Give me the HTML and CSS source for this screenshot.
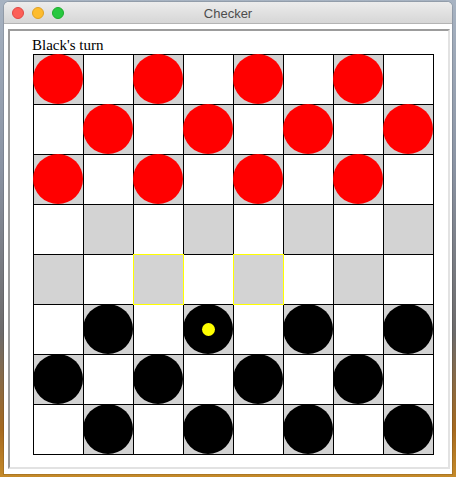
FILE: index.html
```html
<!DOCTYPE html>
<html>
<head>
<meta charset="utf-8">
<title>Checker</title>
<link rel="stylesheet" href="styles.css">
</head>
<body>
<div class="window">
  <div class="titlebar">
    <div class="lights">
      <span class="light red"></span>
      <span class="light yellow"></span>
      <span class="light green"></span>
    </div>
    <div class="title">Checker</div>
  </div>
  <div class="content">
    <div class="frame">
      <div class="status">Black's turn</div>
      <div class="board">
        <div class="cell dark"><span class="piece red"></span></div><div class="cell"></div><div class="cell dark"><span class="piece red"></span></div><div class="cell"></div><div class="cell dark"><span class="piece red"></span></div><div class="cell"></div><div class="cell dark"><span class="piece red"></span></div><div class="cell"></div>
        <div class="cell"></div><div class="cell dark"><span class="piece red"></span></div><div class="cell"></div><div class="cell dark"><span class="piece red"></span></div><div class="cell"></div><div class="cell dark"><span class="piece red"></span></div><div class="cell"></div><div class="cell dark"><span class="piece red"></span></div>
        <div class="cell dark"><span class="piece red"></span></div><div class="cell"></div><div class="cell dark"><span class="piece red"></span></div><div class="cell"></div><div class="cell dark"><span class="piece red"></span></div><div class="cell"></div><div class="cell dark"><span class="piece red"></span></div><div class="cell"></div>
        <div class="cell"></div><div class="cell dark"></div><div class="cell"></div><div class="cell dark"></div><div class="cell"></div><div class="cell dark"></div><div class="cell"></div><div class="cell dark"></div>
        <div class="cell dark"></div><div class="cell"></div><div class="cell dark target"></div><div class="cell"></div><div class="cell dark target"></div><div class="cell"></div><div class="cell dark"></div><div class="cell"></div>
        <div class="cell"></div><div class="cell dark"><span class="piece black"></span></div><div class="cell"></div><div class="cell dark"><span class="piece black"><span class="dot"></span></span></div><div class="cell"></div><div class="cell dark"><span class="piece black"></span></div><div class="cell"></div><div class="cell dark"><span class="piece black"></span></div>
        <div class="cell dark"><span class="piece black"></span></div><div class="cell"></div><div class="cell dark"><span class="piece black"></span></div><div class="cell"></div><div class="cell dark"><span class="piece black"></span></div><div class="cell"></div><div class="cell dark"><span class="piece black"></span></div><div class="cell"></div>
        <div class="cell"></div><div class="cell dark"><span class="piece black"></span></div><div class="cell"></div><div class="cell dark"><span class="piece black"></span></div><div class="cell"></div><div class="cell dark"><span class="piece black"></span></div><div class="cell"></div><div class="cell dark"><span class="piece black"></span></div>
      </div>
    </div>
  </div>
</div>
</body>
</html>
```
FILE: styles.css
```css
html, body {
  margin: 0;
  padding: 0;
}
body {
  width: 456px;
  height: 477px;
  overflow: hidden;
  background: linear-gradient(to bottom, #a7b3c2 0%, #8a93a3 35%, #6c6a6a 70%, #a5691f 90%, #c58a2a 100%);
}
.window {
  margin: 2px 4px 0 4px;
  width: 448px;
  height: 472px;
  background: #ffffff;
  border-radius: 5px 5px 0 0;
  overflow: hidden;
  box-shadow: 0 0 0 1px rgba(0,0,0,0.12);
}
.titlebar {
  height: 21px;
  border-bottom: 1px solid #b4b4b4;
  background: linear-gradient(to bottom, #ececec, #d6d6d6);
  display: flex;
  align-items: center;
  position: relative;
}
.lights {
  display: flex;
  gap: 8px;
  padding-left: 8px;
}
.light {
  width: 12px;
  height: 12px;
  border-radius: 50%;
  box-sizing: border-box;
}
.light.red { background: #fc5f57; border: 1px solid #df4744; }
.light.yellow { background: #fdbc2e; border: 1px solid #dea123; }
.light.green { background: #28c840; border: 1px solid #1dac2c; }
.title {
  position: absolute;
  left: 0;
  right: 0;
  top: 0;
  bottom: 0;
  display: flex;
  align-items: center;
  justify-content: center;
  font-family: "Liberation Sans", Arial, sans-serif;
  font-size: 13px;
  color: #4d4d4d;
  padding-top: 1px;
}
.content {
  padding: 5px 2px 0 4px;
}
.frame {
  border: 2px solid;
  border-color: #9c9c9c #e2e2e2 #e2e2e2 #9c9c9c;
  padding: 5px 0 12px 22px;
  background: #ffffff;
}
.status {
  font-family: "Liberation Serif", "Times New Roman", serif;
  font-size: 15px;
  line-height: 18px;
  color: #000;
}
.board {
  margin-left: 1px;
  display: grid;
  grid-template-columns: repeat(8, 49px);
  grid-auto-rows: 49px;
  gap: 1px;
  padding: 1px;
  width: max-content;
  background: #000;
}
.cell {
  background: #ffffff;
  position: relative;
}
.cell.dark {
  background: #d3d3d3;
}
.cell.target {
  outline: 1px solid #ffff00;
}
.piece {
  position: absolute;
  top: -1px;
  left: -1px;
  width: 50px;
  height: 50px;
  border-radius: 50%;
  display: flex;
  align-items: center;
  justify-content: center;
}
.piece.red { background: #ff0000; }
.piece.black { background: #000000; }
.dot {
  width: 13px;
  height: 13px;
  border-radius: 50%;
  background: #ffff00;
}
```
